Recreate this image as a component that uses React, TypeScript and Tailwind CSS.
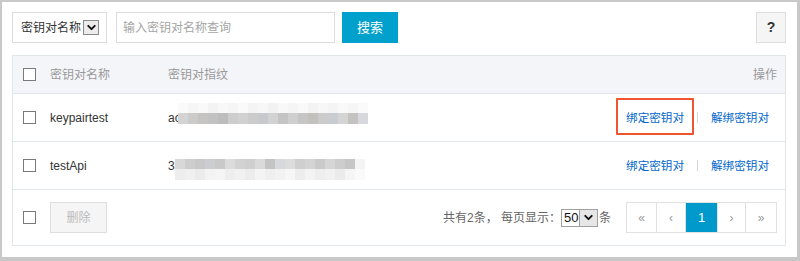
import { ChevronDown } from 'lucide-react';

const FONT = "font-['Liberation_Sans','Noto_Sans_CJK_SC',sans-serif]";

// blurred fingerprint cells (top strip / bottom strip)
const FP1_TOP = [
  'bg-[#fafafa]', 'bg-[#f6f6f6]', 'bg-[#f9f9f9]', 'bg-[#f3f3f3]', 'bg-[#f8f8f8]', 'bg-[#f5f5f5]',
  'bg-[#fafafa]', 'bg-[#f4f4f4]', 'bg-[#f7f7f7]', 'bg-[#f2f2f2]', 'bg-[#f8f8f8]', 'bg-[#f5f5f5]',
  'bg-[#f9f9f9]', 'bg-[#f3f3f3]', 'bg-[#f7f7f7]', 'bg-[#f4f4f4]', 'bg-[#f9f9f9]', 'bg-[#f6f6f6]', 'bg-[#fafafa]',
];
const FP1_BOT = [
  'bg-[#d3d3d3]', 'bg-[#cbcbcb]', 'bg-[#c6c4c2]', 'bg-[#c2c2c2]', 'bg-[#bdbdbd]', 'bg-[#cdcdcd]',
  'bg-[#d1d1d1]', 'bg-[#cbcbcb]', 'bg-[#c7c9cc]', 'bg-[#d2d2d2]', 'bg-[#c4c4c4]', 'bg-[#cfcfcf]',
  'bg-[#c6c6c6]', 'bg-[#c2c1bd]', 'bg-[#cbcbcb]', 'bg-[#c9ccd1]', 'bg-[#d4d4d4]', 'bg-[#c5c3c0]', 'bg-[#d6d8dd]',
];
const FP2_TOP = [
  'bg-[#d8d8d8]', 'bg-[#cdcdcd]', 'bg-[#c8c8c8]', 'bg-[#cbcdd0]', 'bg-[#c9c9c9]', 'bg-[#dcdcdc]',
  'bg-[#d2d2d2]', 'bg-[#cfcfcf]', 'bg-[#dadada]', 'bg-[#c4c4c4]', 'bg-[#d6d8dc]', 'bg-[#dcdcdc]',
  'bg-[#cfcfcf]', 'bg-[#d4d4d4]', 'bg-[#cacaca]', 'bg-[#d6d6d6]', 'bg-[#cdcdcd]', 'bg-[#c6c6c6]', 'bg-[#f4f4f4]',
];
const FP2_BOT = [
  'bg-[#ededed]', 'bg-[#f0f0f0]', 'bg-[#ebebeb]', 'bg-[#f3f3f3]', 'bg-[#f5f5f5]', 'bg-[#eeeeee]',
  'bg-[#f1f1f1]', 'bg-[#ececec]', 'bg-[#f4f4f4]', 'bg-[#efefef]', 'bg-[#f2f2f2]', 'bg-[#f6f6f6]',
  'bg-[#ededed]', 'bg-[#f3f3f3]', 'bg-[#eeeeee]', 'bg-[#f1f1f1]', 'bg-[#ebebeb]', 'bg-[#f5f5f5]', 'bg-[#fafafa]',
];

function Checkbox() {
  return <span className="block w-[13px] h-[13px] border border-[#7a7a7a] bg-white shrink-0" />;
}

function Blur({ top, bottom }: { top: string[]; bottom: string[] }) {
  return (
    <div className="flex flex-col">
      <div className="flex h-[10px]">
        {top.map((c, i) => (
          <span key={i} className={`${c} w-[10px] h-full`} />
        ))}
      </div>
      <div className="flex h-[11px]">
        {bottom.map((c, i) => (
          <span key={i} className={`${c} w-[10px] h-full`} />
        ))}
      </div>
    </div>
  );
}

function Actions({ highlight }: { highlight?: boolean }) {
  return (
    <div className="flex items-center pr-[16px] text-[11.6px] text-[#0066cc]">
      <span className="relative">
        绑定密钥对
        {highlight && <span className="absolute left-[-10px] right-[-10px] top-[-11px] bottom-[-9px] border-2 border-[#f0532f] rounded-[1px]" />}
      </span>
      <span className="mx-[13px] w-px h-[11px] bg-[#d5d5d5]" />
      <span>解绑密钥对</span>
    </div>
  );
}

function Row({ name, prefix, top, bottom, highlight, shift }: { name: string; prefix: string; top: string[]; bottom: string[]; highlight?: boolean; shift: string }) {
  return (
    <div className="flex items-center h-[48px] border-b border-[#e1e6eb]">
      <div className="w-[37px] pl-[10px]">
        <Checkbox />
      </div>
      <div className="w-[118px] text-[12px] text-[#333]">{name}</div>
      <div className="flex-1 flex items-center text-[12px] text-[#333]">
        <span>{prefix}</span>
        <div className={shift}>
          <Blur top={top} bottom={bottom} />
        </div>
      </div>
      <Actions highlight={highlight} />
    </div>
  );
}

function Pager() {
  const cell = 'flex items-center justify-center h-full text-[12px] text-[#999] border-r border-[#e1e1e1]';
  return (
    <div className="flex h-[31px] border border-[#e1e1e1]">
      <span className={`${cell} w-[30px]`}>«</span>
      <span className={`${cell} w-[29px]`}>‹</span>
      <span className="flex items-center justify-center w-[31px] h-full text-[13px] text-white bg-[#0099cc]">1</span>
      <span className={`${cell} w-[29px] border-l`}>›</span>
      <span className="flex items-center justify-center w-[30px] h-full text-[12px] text-[#999]">»</span>
    </div>
  );
}

export default function App() {
  return (
    <div className={`${FONT} w-[800px] h-[261px] bg-white border-t-2 border-l-2 border-r-[3px] border-b-[4px] border-[#c8c8c8] pl-[10px] pr-[11px] pt-[10px] text-[#333]`}>
      {/* Toolbar */}
      <div className="flex items-center h-[31px]">
        <div className="flex items-center h-full w-[95px] border border-[#dcdcdc] pl-[8px] text-[12px] text-[#333]">
          <span>密钥对名称</span>
          <span className="ml-[2px] flex items-center justify-center w-[16px] h-[15px] border border-[#8a8a8a] bg-[#ececec]">
            <ChevronDown className="w-[13px] h-[13px]" strokeWidth={3.5} color="#111" />
          </span>
        </div>
        <div className="ml-[9px] flex items-center h-full w-[219px] border border-[#dcdcdc] pl-[6px] text-[12px] text-[#a5a5a5]">
          输入密钥对名称查询
        </div>
        <button className="ml-[7px] h-full w-[56px] bg-[#00a0cc] text-white text-[13px]">搜索</button>
        <div className="flex-1" />
        <button className="h-full w-[30px] bg-[#f5f5f5] border border-[#dedede] text-[14px] font-bold text-[#333]">?</button>
      </div>

      {/* Table */}
      <div className="mt-[12px] border-x border-t border-[#e1e6eb]">
        <div className="flex items-center h-[38px] bg-[#f4f5f9] border-b border-[#e1e6eb] text-[12px] text-[#999]">
          <div className="w-[37px] pl-[10px]">
            <Checkbox />
          </div>
          <div className="w-[118px]">密钥对名称</div>
          <div className="flex-1">密钥对指纹</div>
          <div className="pr-[8px]">操作</div>
        </div>
        <Row name="keypairtest" prefix="ac" top={FP1_TOP} bottom={FP1_BOT} highlight shift="ml-[-3px] mb-[8px]" />
        <Row name="testApi" prefix="3" top={FP2_TOP} bottom={FP2_BOT} shift="ml-[0px] mt-[7px]" />
        <div className="flex items-center h-[56px] border-b border-[#e1e6eb]">
          <div className="w-[37px] pl-[10px]">
            <Checkbox />
          </div>
          <button className="w-[57px] h-[31px] bg-[#f5f5f5] border border-[#dedede] text-[12px] text-[#bbb]">删除</button>
          <div className="flex-1" />
          <div className="flex items-center text-[12px] text-[#666]">
            <span>共有2条， 每页显示：</span>
            <span className="flex items-center h-[18px] w-[37px] border border-[#a0a0a0] bg-white">
              <span className="flex-1 pl-[2px] text-[13px] text-[#111]">50</span>
              <span className="flex items-center justify-center w-[18px] h-full bg-[#e6e6e6] border-l border-[#a0a0a0]">
                <ChevronDown className="w-[13px] h-[13px]" strokeWidth={3.5} color="#111" />
              </span>
            </span>
            <span className="ml-[1px]">条</span>
          </div>
          <div className="ml-[15px] mr-[8px]">
            <Pager />
          </div>
        </div>
      </div>
    </div>
  );
}
